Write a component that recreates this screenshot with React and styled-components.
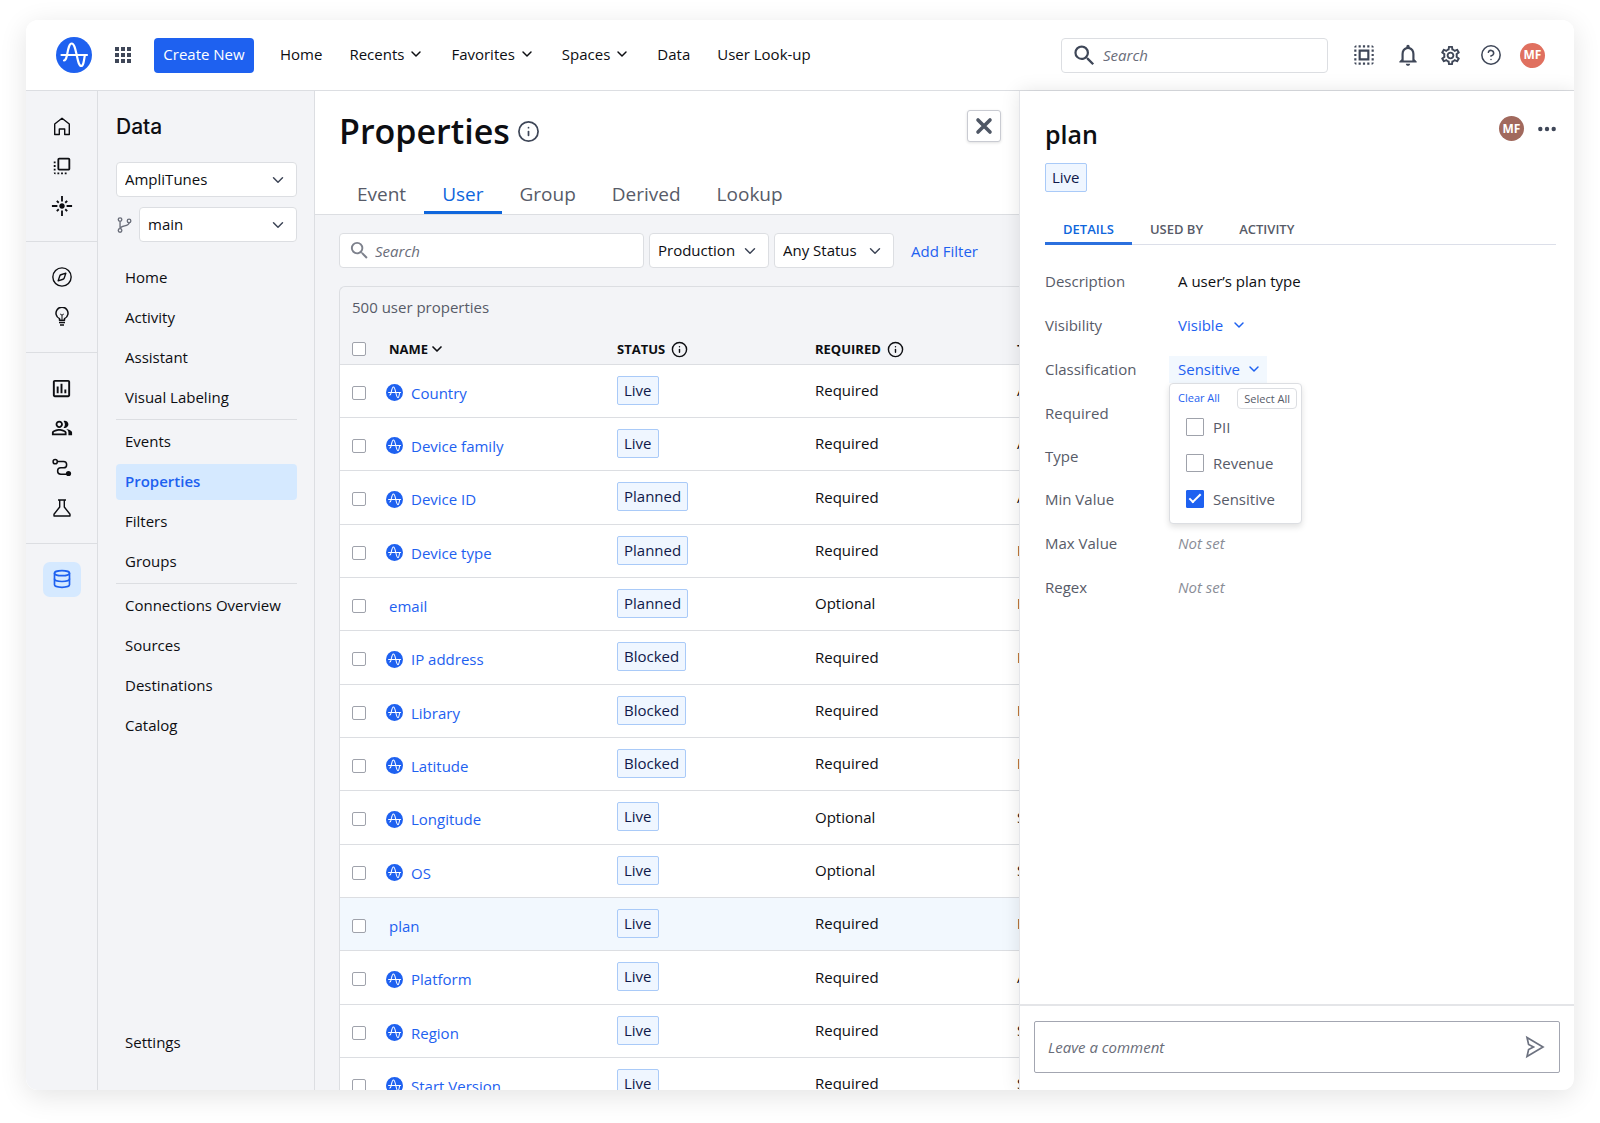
import React, { useState } from "react";
import styled, { createGlobalStyle, css } from "styled-components";
import { ChevronDown, CircleHelp, Compass, Database, Info } from "lucide-react";
import {
  MdApps,
  MdFlare,
  MdFlipToFront,
  MdNotificationsNone,
  MdOutlineAssessment,
  MdOutlinePeopleAlt,
  MdOutlineSettings,
  MdSearch,
  MdSelectAll,
} from "react-icons/md";

const color = {
  text: "#0d0e12",
  muted: "#575b68",
  slate: "#3f4758",
  blue: "#1e61f0",
  tabBlue: "#0f66dc",
  line: "#dcdee2",
  surface: "#f3f4f7",
  tint: "#d5e9ff",
  pale: "#f2f8fe",
};

const GlobalStyle = createGlobalStyle`
  *, *::before, *::after { box-sizing: border-box; }
  body {
    margin: 0;
    background: #fff;
    color: ${color.text};
    font: 400 15px/20px "Open Sans", "Noto Sans", sans-serif;
  }
  button, input, select { font: inherit; color: inherit; }
  button { padding: 0; border: 0; background: none; cursor: pointer; }
  a { color: inherit; text-decoration: none; }
  h1, h2, p { margin: 0; }
  svg { display: block; flex: none; }
`;

const Page = styled.div`
  height: 100vh;
  padding: 20px 26px 33px;
`;

const Window = styled.div`
  height: 100%;
  display: flex;
  flex-direction: column;
  overflow: hidden;
  border-radius: 12px;
  background: #fff;
`;

const WindowShadow = styled.div`
  height: 100%;
  border-radius: 12px;
  box-shadow: 0 6px 28px rgba(0, 0, 0, 0.11);
`;

/* ---------- top bar ---------- */

const TopBar = styled.header`
  flex: none;
  display: flex;
  align-items: center;
  gap: 19px;
  height: 71px;
  padding: 0 29px 0 30px;
  border-bottom: 1px solid ${color.line};
`;

const IconButton = styled.button`
  display: grid;
  place-items: center;
  color: ${color.slate};
`;

const CreateButton = styled.button`
  height: 35px;
  width: 100px;
  padding-bottom: 2px;
  border-radius: 4px;
  background: ${color.blue};
  color: #fff;
  white-space: nowrap;
`;

const TopNav = styled.nav`
  display: flex;
  align-items: center;
  gap: 27px;
  margin-left: 7px;
  padding-bottom: 2px;
  white-space: nowrap;
`;

const NavMenu = styled.button`
  display: flex;
  align-items: center;
  gap: 4px;
`;

const TopTools = styled.div`
  display: flex;
  align-items: center;
  gap: 18px;
  margin-left: auto;
`;

const SearchField = styled.label`
  display: flex;
  align-items: center;
  gap: ${(p) => (p.$large ? 5 : 4)}px;
  width: ${(p) => (p.$large ? 267 : 305)}px;
  height: 35px;
  padding-left: ${(p) => (p.$large ? 9 : 8)}px;
  margin-right: ${(p) => (p.$large ? 5 : 0)}px;
  border: 1px solid ${color.line};
  border-radius: 4px;
  background: #fff;
  color: ${(p) => (p.$large ? color.slate : "#7d818c")};
`;

const TextInput = styled.input`
  flex: 1;
  min-width: 0;
  height: 100%;
  padding: 0;
  border: 0;
  outline: 0;
  background: transparent;
  color: ${color.text};
  &::placeholder {
    color: #696d79;
    opacity: 1;
    font-style: italic;
  }
`;

const Avatar = styled.span`
  display: grid;
  place-items: center;
  width: 25px;
  height: 25px;
  border-radius: 50%;
  background: ${(p) => p.$fill};
  color: #fff;
  font-size: 12px;
  font-weight: 700;
`;

/* ---------- frame ---------- */

const Body = styled.div`
  flex: 1;
  min-height: 0;
  display: grid;
  grid-template-columns: 72px 217px minmax(0, 1fr) 555px;
  grid-template-rows: minmax(0, 1fr);
`;

const Rail = styled.nav`
  border-right: 1px solid ${color.line};
  background: ${color.surface};
`;

const RailSection = styled.div`
  display: grid;
  grid-auto-rows: 40px;
  place-items: center;
  padding: 15px 0;
  & + & {
    border-top: 1px solid ${color.line};
  }
`;

const RailButton = styled.button`
  display: grid;
  place-items: center;
  width: 38px;
  height: 35px;
  border-radius: 7px;
  ${(p) =>
    p.$active &&
    css`
      background: ${color.tint};
      color: ${color.blue};
    `}
`;

const Sidebar = styled.aside`
  display: flex;
  flex-direction: column;
  padding: 18px 17px 29px 18px;
  border-right: 1px solid ${color.line};
  background: ${color.surface};
`;

const SidebarTitle = styled.h2`
  margin-bottom: 17px;
  font: 500 21px/36px Inter, sans-serif;
`;

const BranchRow = styled.div`
  display: flex;
  align-items: center;
  gap: 5px;
  margin: 10px 0 18px;
  color: #6a6e7a;
`;

const SelectBox = styled.span`
  display: grid;
  flex: ${(p) => (p.$grow ? 1 : "none")};
  align-items: center;
  width: ${(p) => (p.$filter ? "120px" : "auto")};
  height: 35px;
  color: ${color.slate};
  & > * {
    grid-area: 1 / 1;
  }
  & > svg {
    justify-self: end;
    margin-right: 10px;
    pointer-events: none;
  }
`;

const Select = styled.select`
  appearance: none;
  width: 100%;
  height: 100%;
  padding: 0 8px 2px;
  border: 1px solid ${color.line};
  border-radius: 4px;
  background: #fff;
  color: ${color.text};
`;

const SideGroup = styled.div`
  display: grid;
  grid-auto-rows: 36px;
  gap: 4px;
  & + & {
    margin-top: 3px;
    padding-top: 4px;
    border-top: 1px solid ${color.line};
  }
`;

const SideLink = styled.a`
  display: flex;
  align-items: center;
  padding: 0 9px 2px;
  border-radius: 4px;
  ${(p) =>
    p.$active &&
    css`
      background: ${color.tint};
      color: ${color.blue};
      font-weight: 600;
    `}
`;

const SidebarFooter = styled.div`
  display: grid;
  grid-auto-rows: 36px;
  margin-top: auto;
`;

/* ---------- main column ---------- */

const Main = styled.main`
  display: flex;
  flex-direction: column;
  overflow: hidden;
  background: ${color.surface};
`;

const MainHeader = styled.div`
  flex: none;
  padding: 19px 18px 0 24px;
  border-bottom: 1px solid ${color.line};
  background: #fff;
`;

const TitleRow = styled.div`
  display: flex;
  align-items: flex-start;
  justify-content: space-between;
  margin-bottom: 22px;
`;

const PageTitle = styled.h1`
  display: flex;
  align-items: center;
  gap: 7px;
  font-size: 34px;
  font-weight: 600;
  line-height: 42px;
  & > svg {
    color: ${color.slate};
  }
`;

const CloseButton = styled.button`
  display: grid;
  place-items: center;
  width: 34px;
  height: 32px;
  border: 1px solid #c9cbd2;
  border-radius: 3px;
  background: #fff;
  color: #4f5765;
  box-shadow: 0 1px 3px rgba(0, 0, 0, 0.12);
`;

const Tabs = styled.div`
  display: flex;
`;

const Tab = styled.button`
  height: 40px;
  padding: 2px 18px 0;
  border-bottom: 3px solid ${(p) => (p.$active ? color.tabBlue : "transparent")};
  color: ${(p) => (p.$active ? color.tabBlue : color.muted)};
  font-size: 19px;
  line-height: 26px;
`;

const FilterBar = styled.div`
  flex: none;
  display: flex;
  align-items: center;
  gap: 5px;
  padding: 18px 0 18px 24px;
  white-space: nowrap;
`;

const TextLink = styled.a`
  color: ${color.blue};
`;

const AddFilter = styled.button`
  margin-left: 12px;
  color: ${color.blue};
`;

const Card = styled.section`
  align-self: flex-start;
  min-width: calc(100% - 24px);
  margin-left: 24px;
  border: solid ${color.line};
  border-width: 1px 0 0 1px;
  border-radius: 6px 0 0 0;
`;

const Count = styled.p`
  padding: 10px 12px 17px;
  color: ${color.muted};
`;

const Table = styled.table`
  width: 900px;
  min-width: 100%;
  table-layout: fixed;
  border-collapse: separate;
  border-spacing: 0;
  text-align: left;
`;

const Col = styled.col`
  width: ${(p) => p.$w}px;
`;

const HeadCell = styled.th`
  height: 31px;
  padding: 0 0 0 ${(p) => p.$indent || 0}px;
  border-bottom: 1px solid ${color.line};
  font-size: 13px;
  font-weight: 700;
`;

const HeadLabel = styled.span`
  display: flex;
  align-items: center;
  gap: ${(p) => p.$gap || 6}px;
`;

const Row = styled.tr`
  height: 53px;
  background: ${(p) => (p.$selected ? color.pale : "#fff")};
  &:nth-child(3n) {
    height: 54px;
  }
`;

const Cell = styled.td`
  padding: ${(p) => (p.$low ? "3px 0 0" : "0 0 2px")} ${(p) => p.$indent || 0}px;
  border-bottom: 1px solid ${color.line};
`;

const NameLink = styled(TextLink)`
  display: flex;
  align-items: center;
  gap: 8px;
  padding-left: ${(p) => (p.$plain ? 3 : 0)}px;
`;

const Badge = styled.span`
  display: inline-block;
  height: 29px;
  padding: 3px 6px 0;
  border: 1px solid #a9caf8;
  border-radius: 2px;
  background: #eff6ff;
  color: #10194a;
`;

const Checkbox = styled.input`
  appearance: none;
  display: grid;
  place-content: center;
  width: ${(p) => (p.$large ? 18 : 14)}px;
  height: ${(p) => (p.$large ? 18 : 14)}px;
  margin: 0;
  border: 1px solid #9fa2ab;
  border-radius: ${(p) => (p.$large ? 1 : 2)}px;
  background: #fff;
  &:checked {
    border-color: ${color.blue};
    background: ${color.blue};
  }
  &:checked::after {
    content: "";
    width: 12px;
    height: 6px;
    margin-bottom: 4px;
    border: solid #fff;
    border-width: 0 0 2px 2px;
    transform: rotate(-45deg);
  }
`;

/* ---------- detail panel ---------- */

const Panel = styled.aside`
  position: relative;
  display: flex;
  flex-direction: column;
  border-left: 1px solid #e4e5e9;
  background: #fff;
  box-shadow: 0 0 18px rgba(0, 0, 0, 0.1);
`;

const PanelContent = styled.div`
  flex: 1;
  min-height: 0;
  padding: 25px 18px 0 25px;
`;

const PanelHeader = styled.div`
  display: flex;
  align-items: flex-start;
  justify-content: space-between;
  margin-bottom: 11px;
`;

const PanelTitle = styled.h2`
  font-size: 25px;
  font-weight: 600;
  line-height: 36px;
`;

const PanelActions = styled.div`
  display: flex;
  align-items: center;
  gap: 14px;
`;

const PanelTabs = styled.div`
  display: flex;
  margin: 27px 0 14px;
  box-shadow: inset 0 -1px 0 #dcdfe9;
`;

const PanelTab = styled.button`
  padding: 0 18px 3px;
  border-bottom: 3px solid ${(p) => (p.$active ? "#2b70de" : "transparent")};
  color: ${(p) => (p.$active ? color.tabBlue : color.muted)};
  font-size: 13px;
  font-weight: 600;
`;

const Field = styled.div`
  display: grid;
  grid-template-columns: 124px 1fr;
  align-items: center;
  height: ${(p) => (p.$compact ? 43 : 44)}px;
  color: ${color.muted};
`;

const Value = styled.span`
  padding: 0 9px;
  color: ${color.text};
`;

const Unset = styled(Value)`
  color: #8a8d97;
  font-style: italic;
`;

const InlineSelect = styled.span`
  display: grid;
  align-items: center;
  justify-self: start;
  color: ${color.blue};
  & > * {
    grid-area: 1 / 1;
  }
  & > svg {
    justify-self: end;
    margin-right: 5px;
    pointer-events: none;
  }
  & > select {
    appearance: none;
    padding: 0 28px 0 9px;
    border: 0;
    background: none;
  }
`;

const PickerAnchor = styled.div`
  position: relative;
  justify-self: start;
`;

const PickerButton = styled.button`
  display: flex;
  align-items: center;
  gap: 6px;
  height: 27px;
  padding: 0 5px 0 9px;
  background: ${color.pale};
  color: ${color.blue};
`;

const PickerMenu = styled.div`
  position: absolute;
  top: 100%;
  left: 0;
  width: 133px;
  padding: 4px 4px 6px 8px;
  border: 1px solid ${color.line};
  border-radius: 4px;
  background: #fff;
  box-shadow: 0 3px 6px rgba(0, 0, 0, 0.12);
`;

const PickerActions = styled.div`
  display: flex;
  align-items: center;
  justify-content: space-between;
  font-size: 11px;
`;

const ClearButton = styled.button`
  color: ${color.blue};
`;

const SelectAllButton = styled.button`
  height: 21px;
  padding: 0 6px;
  border: 1px solid ${color.line};
  border-radius: 4px;
`;

const Option = styled.label`
  display: flex;
  align-items: center;
  gap: 9px;
  height: 36px;
  padding-left: 8px;
`;

const CommentBar = styled.div`
  flex: none;
  padding: 15px 14px 17px;
  border-top: 2px solid #e4e5e8;
`;

const CommentField = styled.label`
  display: flex;
  align-items: center;
  height: 52px;
  padding: 0 14px 0 13px;
  border: 1px solid #a3a6b1;
  border-radius: 2px;
`;

/* ---------- drawings ---------- */

const Logo = ({ size }) => (
  <svg width={size} height={size} viewBox="0 0 36 36" aria-hidden="true">
    <circle cx="18" cy="18" r="18" fill={color.blue} />
    <g fill="none" stroke="#fff" strokeWidth="2.200" strokeLinecap="round" strokeLinejoin="round">
      <path d="M5.500 18H31" />
      <path d="M8 23.500c1.500 0 2-1 2.800-4.500 1.200-6 2.200-12.500 4.900-12.500s3.800 6.500 5.200 12.500c1.200 5.500 2.200 10 4.300 10s2.800-5 3.600-10.500" />
    </g>
  </svg>
);

const Line = ({ size = 20, width = 1.5, children }) => (
  <svg
    width={size}
    height={size}
    viewBox="0 0 20 20"
    fill="none"
    stroke="currentColor"
    strokeWidth={width}
    strokeLinejoin="round"
    aria-hidden="true"
  >
    {children}
  </svg>
);

const HomeIcon = () => (
  <Line width={1.4}>
    <path d="M2.700 18.500V8L10 2.200 17.300 8v10.500h-4.600V13H7.300v5.500z" />
  </Line>
);

const BulbIcon = () => (
  <Line>
    <path d="M7.500 13.200v-1.600a6 6 0 1 1 5 0v1.600zM7 15.400h6M8 18h4" />
    <path d="M8.200 7l1.800 1.200L11.800 7M10 8.200v4.500" strokeWidth="1" />
  </Line>
);

const RouteIcon = () => (
  <Line>
    <circle cx="3.200" cy="3.700" r="2.100" />
    <path d="M5.300 3.500h6.200a3 3 0 0 1 0 6.300H8.800a3.200 3.200 0 0 0 0 6.400h5.700" />
    <circle cx="16.500" cy="15.500" r="2.600" fill="currentColor" stroke="none" />
  </Line>
);

const FlaskIcon = () => (
  <Line width={1.400}>
    <path d="M6 2h8M7.700 2v7L2 16.300V18h16v-1.700L12.300 9V2" />
  </Line>
);

const BranchIcon = () => (
  <Line size={18}>
    <circle cx="4.500" cy="4" r="2" />
    <circle cx="4.500" cy="16" r="2" />
    <circle cx="14.500" cy="5.500" r="2" />
    <path d="M4.500 6v8M14.500 7.500c0 4.500-9 2.500-10 6.500" />
  </Line>
);

const CrossIcon = () => (
  <svg width="18" height="18" viewBox="0 0 18 18" aria-hidden="true">
    <path d="M3 3l12 12M15 3L3 15" stroke="currentColor" strokeWidth="3.600" strokeLinecap="round" />
  </svg>
);

const DotsIcon = () => (
  <svg width="18" height="6" viewBox="0 0 18 6" fill="currentColor" aria-hidden="true">
    <circle cx="2.300" cy="3" r="2.200" />
    <circle cx="9" cy="3" r="2.200" />
    <circle cx="15.700" cy="3" r="2.200" />
  </svg>
);

const SendIcon = () => (
  <svg width="20" height="24" viewBox="0 0 20 24" fill="none" stroke="#6d7280" strokeWidth="1.700" aria-hidden="true">
    <path d="M2 2.500L18 12 2 21.500l1.600-7L8.500 12 3.600 9.500z" />
  </svg>
);

const Caret = () => <ChevronDown size={16} strokeWidth={2.2} />;
const SelectCaret = () => <ChevronDown size={18} strokeWidth={2} />;

/* ---------- data ---------- */

const sideGroups = [
  ["Home", "Activity", "Assistant", "Visual Labeling"],
  ["Events", "Properties", "Filters", "Groups"],
  ["Connections Overview", "Sources", "Destinations", "Catalog"],
];

const rows = [
  ["Country", "Live", "Required", "Any"],
  ["Device family", "Live", "Required", "Any"],
  ["Device ID", "Planned", "Required", "Any"],
  ["Device type", "Planned", "Required", "Enum"],
  ["email", "Planned", "Optional", "Enum", true],
  ["IP address", "Blocked", "Required", "Enum"],
  ["Library", "Blocked", "Required", "Enum"],
  ["Latitude", "Blocked", "Required", "Enum"],
  ["Longitude", "Live", "Optional", "String"],
  ["OS", "Live", "Optional", "String"],
  ["plan", "Live", "Required", "Enum", true],
  ["Platform", "Live", "Required", "Any"],
  ["Region", "Live", "Required", "String"],
  ["Start Version", "Live", "Required", "String"],
];

const classes = ["PII", "Revenue", "Sensitive"];

/* ---------- parts ---------- */

function Header() {
  return (
    <TopBar>
      <a href="#home" aria-label="Amplitude">
        <Logo size={36} />
      </a>
      <IconButton aria-label="Apps">
        <MdApps size={24} />
      </IconButton>
      <CreateButton>Create New</CreateButton>
      <TopNav>
        <a href="#home">Home</a>
        {["Recents", "Favorites", "Spaces"].map((name) => (
          <NavMenu key={name}>
            {name}
            <Caret />
          </NavMenu>
        ))}
        <a href="#data">Data</a>
        <a href="#lookup">User Look-up</a>
      </TopNav>
      <TopTools>
        <SearchField $large>
          <MdSearch size={27} />
          <TextInput type="search" placeholder="Search" aria-label="Search" />
        </SearchField>
        <IconButton aria-label="Select all">
          <MdSelectAll size={26} />
        </IconButton>
        <IconButton aria-label="Notifications">
          <MdNotificationsNone size={26} />
        </IconButton>
        <IconButton aria-label="Settings">
          <MdOutlineSettings size={23} />
        </IconButton>
        <IconButton aria-label="Help">
          <CircleHelp size={22} strokeWidth={1.7} />
        </IconButton>
        <Avatar $fill="#e0705f">MF</Avatar>
      </TopTools>
    </TopBar>
  );
}

function IconRail() {
  return (
    <Rail aria-label="Sections">
      <RailSection>
        <RailButton aria-label="Home"><HomeIcon /></RailButton>
        <RailButton aria-label="Spaces"><MdFlipToFront size={22} /></RailButton>
        <RailButton aria-label="Highlights"><MdFlare size={22} /></RailButton>
      </RailSection>
      <RailSection>
        <RailButton aria-label="Explore"><Compass size={22} strokeWidth={1.5} /></RailButton>
        <RailButton aria-label="Ideas"><BulbIcon /></RailButton>
      </RailSection>
      <RailSection>
        <RailButton aria-label="Charts"><MdOutlineAssessment size={23} /></RailButton>
        <RailButton aria-label="Cohorts"><MdOutlinePeopleAlt size={22} /></RailButton>
        <RailButton aria-label="Journeys"><RouteIcon /></RailButton>
        <RailButton aria-label="Experiments"><FlaskIcon /></RailButton>
      </RailSection>
      <RailSection>
        <RailButton aria-label="Data" $active><Database size={20} strokeWidth={2} /></RailButton>
      </RailSection>
    </Rail>
  );
}

function DataSidebar() {
  return (
    <Sidebar>
      <SidebarTitle>Data</SidebarTitle>
      <SelectBox>
        <Select aria-label="Project" defaultValue="AmpliTunes">
          <option>AmpliTunes</option>
        </Select>
        <SelectCaret />
      </SelectBox>
      <BranchRow>
        <BranchIcon />
        <SelectBox $grow>
          <Select aria-label="Branch" defaultValue="main">
            <option>main</option>
          </Select>
          <SelectCaret />
        </SelectBox>
      </BranchRow>
      {sideGroups.map((group) => (
        <SideGroup key={group[0]}>
          {group.map((name) => (
            <SideLink key={name} href="#section" $active={name === "Properties"}>
              {name}
            </SideLink>
          ))}
        </SideGroup>
      ))}
      <SidebarFooter>
        <SideLink href="#settings">Settings</SideLink>
      </SidebarFooter>
    </Sidebar>
  );
}

function PropertyTable() {
  return (
    <Card>
      <Count>500 user properties</Count>
      <Table>
        <colgroup>
          <Col $w={46} />
          <Col $w={231} />
          <Col $w={198} />
          <Col $w={202} />
          <col />
        </colgroup>
        <thead>
          <tr>
            <HeadCell $indent={12}>
              <Checkbox type="checkbox" aria-label="Select all properties" />
            </HeadCell>
            <HeadCell $indent={3}>
              <HeadLabel $gap={1}>NAME <ChevronDown size={16} strokeWidth={2.5} /></HeadLabel>
            </HeadCell>
            <HeadCell>
              <HeadLabel>STATUS <Info size={17} /></HeadLabel>
            </HeadCell>
            <HeadCell>
              <HeadLabel>REQUIRED <Info size={17} /></HeadLabel>
            </HeadCell>
            <HeadCell>TYPE</HeadCell>
          </tr>
        </thead>
        <tbody>
          {rows.map(([name, status, required, type, custom]) => (
            <Row key={name} $selected={name === "plan"}>
              <Cell $low $indent={12}>
                <Checkbox type="checkbox" aria-label={`Select ${name}`} />
              </Cell>
              <Cell $low>
                <NameLink href="#property" $plain={custom}>
                  {!custom && <Logo size={17} />}
                  {name}
                </NameLink>
              </Cell>
              <Cell><Badge>{status}</Badge></Cell>
              <Cell>{required}</Cell>
              <Cell>{type}</Cell>
            </Row>
          ))}
        </tbody>
      </Table>
    </Card>
  );
}

function PropertiesPage() {
  return (
    <Main>
      <MainHeader>
        <TitleRow>
          <PageTitle>
            Properties
            <Info size={23} strokeWidth={1.8} />
          </PageTitle>
          <CloseButton aria-label="Close"><CrossIcon /></CloseButton>
        </TitleRow>
        <Tabs role="tablist">
          {["Event", "User", "Group", "Derived", "Lookup"].map((name) => (
            <Tab key={name} role="tab" aria-selected={name === "User"} $active={name === "User"}>
              {name}
            </Tab>
          ))}
        </Tabs>
      </MainHeader>
      <FilterBar>
        <SearchField>
          <MdSearch size={23} />
          <TextInput type="search" placeholder="Search" aria-label="Search properties" />
        </SearchField>
        {["Production", "Any Status"].map((name) => (
          <SelectBox key={name} $filter>
            <Select aria-label={name} defaultValue={name}>
              <option>{name}</option>
            </Select>
            <SelectCaret />
          </SelectBox>
        ))}
        <AddFilter>Add Filter</AddFilter>
      </FilterBar>
      <PropertyTable />
    </Main>
  );
}

function ClassificationPicker() {
  const [picked, setPicked] = useState(["Sensitive"]);
  const toggle = (name) =>
    setPicked((now) => (now.includes(name) ? now.filter((n) => n !== name) : [...now, name]));
  return (
    <PickerAnchor>
      <PickerButton aria-expanded="true" aria-labelledby="classification">
        {picked.join(", ") || "None"}
        <Caret />
      </PickerButton>
      <PickerMenu>
        <PickerActions>
          <ClearButton onClick={() => setPicked([])}>Clear All</ClearButton>
          <SelectAllButton onClick={() => setPicked(classes)}>Select All</SelectAllButton>
        </PickerActions>
        {classes.map((name) => (
          <Option key={name}>
            <Checkbox
              $large
              type="checkbox"
              checked={picked.includes(name)}
              onChange={() => toggle(name)}
            />
            {name}
          </Option>
        ))}
      </PickerMenu>
    </PickerAnchor>
  );
}

function DetailPanel() {
  return (
    <Panel>
      <PanelContent>
        <PanelHeader>
          <PanelTitle>plan</PanelTitle>
          <PanelActions>
            <Avatar $fill="#a1695d">MF</Avatar>
            <IconButton aria-label="More"><DotsIcon /></IconButton>
          </PanelActions>
        </PanelHeader>
        <Badge>Live</Badge>
        <PanelTabs role="tablist">
          {["DETAILS", "USED BY", "ACTIVITY"].map((name) => (
            <PanelTab key={name} role="tab" aria-selected={name === "DETAILS"} $active={name === "DETAILS"}>
              {name}
            </PanelTab>
          ))}
        </PanelTabs>
        <Field>
          <span>Description</span>
          <Value>A user’s plan type</Value>
        </Field>
        <Field>
          <label htmlFor="visibility">Visibility</label>
          <InlineSelect>
            <select id="visibility" defaultValue="Visible">
              <option>Visible</option>
            </select>
            <Caret />
          </InlineSelect>
        </Field>
        <Field>
          <span id="classification">Classification</span>
          <ClassificationPicker />
        </Field>
        <Field $compact><span>Required</span></Field>
        <Field $compact><span>Type</span></Field>
        <Field><span>Min Value</span></Field>
        <Field><span>Max Value</span><Unset>Not set</Unset></Field>
        <Field><span>Regex</span><Unset>Not set</Unset></Field>
      </PanelContent>
      <CommentBar>
        <CommentField>
          <TextInput type="text" placeholder="Leave a comment" aria-label="Leave a comment" />
          <IconButton aria-label="Send"><SendIcon /></IconButton>
        </CommentField>
      </CommentBar>
    </Panel>
  );
}

export default function App() {
  return (
    <>
      <GlobalStyle />
      <Page>
        <WindowShadow>
          <Window>
            <Header />
            <Body>
              <IconRail />
              <DataSidebar />
              <PropertiesPage />
              <DetailPanel />
            </Body>
          </Window>
        </WindowShadow>
      </Page>
    </>
  );
}
